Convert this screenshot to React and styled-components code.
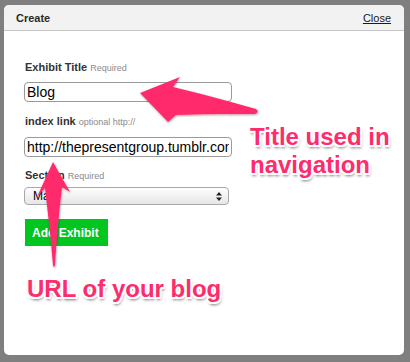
import React from "react";
import styled, { createGlobalStyle } from "styled-components";

const GlobalStyle = createGlobalStyle`
  html, body {
    margin: 0;
    padding: 0;
    background: #7f7f7f;
    font-family: "Liberation Sans", Arial, Helvetica, sans-serif;
  }
`;

const Page = styled.div`
  position: relative;
  width: 410px;
  height: 362px;
  padding: 5px 0 0 4px;
  box-sizing: border-box;
`;

const Modal = styled.div`
  position: relative;
  width: 400px;
  height: 350px;
  background: #ffffff;
  border-radius: 5px;
  overflow: hidden;
`;

const Header = styled.div`
  display: flex;
  align-items: center;
  justify-content: space-between;
  height: 25px;
  padding: 0 13px 0 12px;
  background: #f2f2f2;
  border-bottom: 1px solid #c6c6c6;
  font-size: 11px;
  color: #2a2a2a;
`;

const Title = styled.span`
  font-weight: bold;
`;

const CloseLink = styled.a`
  color: #1a1a1a;
  text-decoration: underline;
  cursor: pointer;
`;

const Body = styled.div`
  padding: 29px 0 0 20px;
`;

const Field = styled.div`
  margin-bottom: ${(p) => p.gap}px;
`;

const Label = styled.label`
  display: block;
  margin: 0 0 ${(p) => p.gap}px 1px;
  font-size: 11px;
  line-height: 14px;
  font-weight: bold;
  color: #333;
`;

const Hint = styled.span`
  font-size: 9px;
  font-weight: normal;
  color: #8a8a8a;
`;

const TextInput = styled.input`
  display: block;
  box-sizing: border-box;
  width: 208px;
  height: 20px;
  margin: 0;
  padding: 0 2px;
  border: 1px solid #9a9a9a;
  border-radius: 4px;
  font-family: inherit;
  font-size: 14px;
  color: #000;
  background: #fff;
  &:focus {
    outline: none;
  }
`;

const SelectBox = styled.div`
  display: flex;
  align-items: center;
  justify-content: space-between;
  box-sizing: border-box;
  width: 205px;
  height: 18px;
  padding: 0 6px 0 8px;
  border: 1px solid #a8a8a8;
  border-radius: 4px;
  background: linear-gradient(#fefefe, #e6e6e6);
  font-size: 12px;
  color: #000;
`;

const AddButton = styled.button`
  display: block;
  width: 83px;
  height: 27px;
  margin-left: 1px;
  padding: 0 0 0 7px;
  border: none;
  background: #00c61f;
  color: #fff;
  font-family: inherit;
  font-size: 12px;
  font-weight: bold;
  text-align: left;
  cursor: pointer;
`;

const Overlay = styled.svg`
  position: absolute;
  left: 0;
  top: 0;
  pointer-events: none;
`;

const Note = styled.div`
  position: absolute;
  left: ${(p) => p.x}px;
  top: ${(p) => p.y}px;
  font-size: 24px;
  line-height: 28px;
  font-weight: bold;
  color: #fe2c6c;
  white-space: nowrap;
  text-shadow: -2px 0 #fff, 2px 0 #fff, 0 -2px #fff, 0 2px #fff,
    -1.5px -1.5px #fff, 1.5px -1.5px #fff, -1.5px 1.5px #fff, 1.5px 1.5px #fff,
    1px 3px 3px rgba(0, 0, 0, 0.55);
`;

function SortArrows() {
  return (
    <svg width="6" height="9" viewBox="0 0 6 9">
      <path d="M3 0 L6 3.5 H0 Z M3 9 L6 5.5 H0 Z" fill="#222" />
    </svg>
  );
}

export default function App() {
  return (
    <>
      <GlobalStyle />
      <Page>
        <Modal>
          <Header>
            <Title>Create</Title>
            <CloseLink>Close</CloseLink>
          </Header>
          <Body>
            <Field gap={12}>
              <Label gap={7}>
                Exhibit Title <Hint>Required</Hint>
              </Label>
              <TextInput defaultValue="Blog" />
            </Field>
            <Field gap={11}>
              <Label gap={8}>
                index link <Hint>optional http://</Hint>
              </Label>
              <TextInput defaultValue="http://thepresentgroup.tumblr.com" />
            </Field>
            <Field gap={14}>
              <Label gap={4}>
                Section <Hint>Required</Hint>
              </Label>
              <SelectBox>
                <span>Main</span>
                <SortArrows />
              </SelectBox>
            </Field>
            <AddButton>Add Exhibit</AddButton>
          </Body>
          <Note x={246} y={118}>
            Title used in
            <br />
            navigation
          </Note>
          <Note x={23} y={270}>
            URL of your blog
          </Note>
        </Modal>
        <Overlay width="410" height="362" viewBox="0 0 410 362">
          <defs>
            <filter id="sh" x="-20%" y="-20%" width="140%" height="140%">
              <feDropShadow dx="0.5" dy="1" stdDeviation="0.8" floodOpacity="0.35" />
            </filter>
          </defs>
          <g fill="#fe2c6c" filter="url(#sh)">
            <path d="M140 93 L180 77 L173 87 Q215 97 256 109 Q260 112 255 114 Q215 114 176 115 L168 122 Z" />
            <path d="M53 162 L70 192 L62 187 Q57 230 55 265 Q54 269 53 265 Q50 230 45 188 L37 197 Z" />
          </g>
        </Overlay>
      </Page>
    </>
  );
}
